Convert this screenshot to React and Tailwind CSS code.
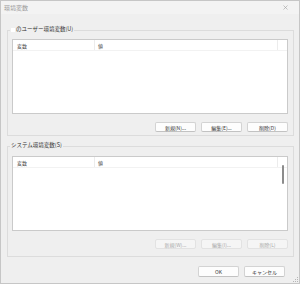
import React from 'react';

const font = { fontFamily: '"Noto Sans CJK JP", "Noto Sans", sans-serif' };

function Btn({ children, disabled }) {
  return (
    <div
      className={`w-[41px] h-[10px] flex items-center justify-center rounded-[2px] border text-[5px] leading-none ${
        disabled
          ? 'bg-[#f5f5f5] border-[#e2e2e2] text-[#a8a8a8]'
          : 'bg-[#fdfdfd] border-[#d3d3d3] border-b-[#c2c2c2] text-[#333]'
      }`}
    >
      {children}
    </div>
  );
}

function ListBox({ scroll }) {
  return (
    <div className="relative h-[75px] bg-white border border-[#cacaca]">
      <div className="flex h-[11px] border-b border-[#f2f2f2] text-[5px] leading-none text-[#444]">
        <div className="w-[82px] flex items-center pl-[4px] border-r border-[#ececec]">変数</div>
        <div className="w-[183px] flex items-center pl-[3px] border-r border-[#ececec]">値</div>
      </div>
      {scroll && (
        <div className="absolute right-[3px] top-[8px] w-[2px] h-[19px] rounded-full bg-[#8c8c8c]" />
      )}
    </div>
  );
}

export default function App() {
  return (
    <div
      className="w-[300px] h-[284px] bg-[#efefef] border border-[#c6c6c6] flex flex-col overflow-hidden"
      style={font}
    >
      {/* Title bar */}
      <div className="h-[13px] bg-[#f3f3f3] flex items-center justify-between pl-[3px] pr-[11px]">
        <span className="text-[6px] leading-none text-[#9a9a9a]">環境変数</span>
        <svg width="5" height="5" viewBox="0 0 10 10" className="text-[#a0a0a0]">
          <path d="M1 1 L9 9 M9 1 L1 9" stroke="currentColor" strokeWidth="1.2" />
        </svg>
      </div>

      {/* User variables */}
      <fieldset className="mt-[12px] ml-[6px] w-[287px] border border-[#dcdcdc] px-0 pb-[3px]">
        <legend className="ml-[2px] px-[1px] h-[8px] flex items-center gap-[1px] text-[5.5px] leading-none text-[#333]">
          <span className="w-[4px] h-[4px] bg-white" />
          のユーザー環境変数(U)
        </legend>
        <div className="pt-[5px] pl-[4px] pr-[5px]">
          <ListBox />
          <div className="mt-[8px] flex justify-end gap-[5px]">
            <Btn>新規(N)...</Btn>
            <Btn>編集(E)...</Btn>
            <Btn>削除(D)</Btn>
          </div>
        </div>
      </fieldset>

      {/* System variables */}
      <fieldset className="mt-[6px] ml-[6px] w-[287px] border border-[#dcdcdc] px-0 pb-[7px]">
        <legend className="ml-[2px] px-[1px] h-[8px] flex items-center text-[5.5px] leading-none text-[#333]">
          システム環境変数(S)
        </legend>
        <div className="pt-[6px] pl-[4px] pr-[5px]">
          <ListBox scroll />
          <div className="mt-[8px] flex justify-end gap-[5px]">
            <Btn disabled>新規(W)...</Btn>
            <Btn disabled>編集(I)...</Btn>
            <Btn disabled>削除(L)</Btn>
          </div>
        </div>
      </fieldset>

      {/* Dialog buttons */}
      <div className="mt-[9px] mr-[14px] flex justify-end gap-[5px]">
        <div className="w-[41px] h-[11px] flex items-center justify-center rounded-[2px] border border-[#d3d3d3] border-b-[#c2c2c2] bg-[#fdfdfd] text-[5px] leading-none text-[#333]">
          OK
        </div>
        <div className="w-[41px] h-[11px] flex items-center justify-center rounded-[2px] border border-[#d3d3d3] border-b-[#c2c2c2] bg-[#fdfdfd] text-[5px] leading-none text-[#333]">
          キャンセル
        </div>
      </div>

      {/* Resize grip */}
      <div className="mt-auto flex justify-end pr-[1px] pb-[1px]">
        <svg width="5" height="5" viewBox="0 0 5 5">
          <rect x="4" y="0" width="1" height="1" fill="#b5b5b5" />
          <rect x="2" y="2" width="1" height="1" fill="#b5b5b5" />
          <rect x="4" y="2" width="1" height="1" fill="#b5b5b5" />
          <rect x="0" y="4" width="1" height="1" fill="#b5b5b5" />
          <rect x="2" y="4" width="1" height="1" fill="#b5b5b5" />
          <rect x="4" y="4" width="1" height="1" fill="#b5b5b5" />
        </svg>
      </div>
    </div>
  );
}
